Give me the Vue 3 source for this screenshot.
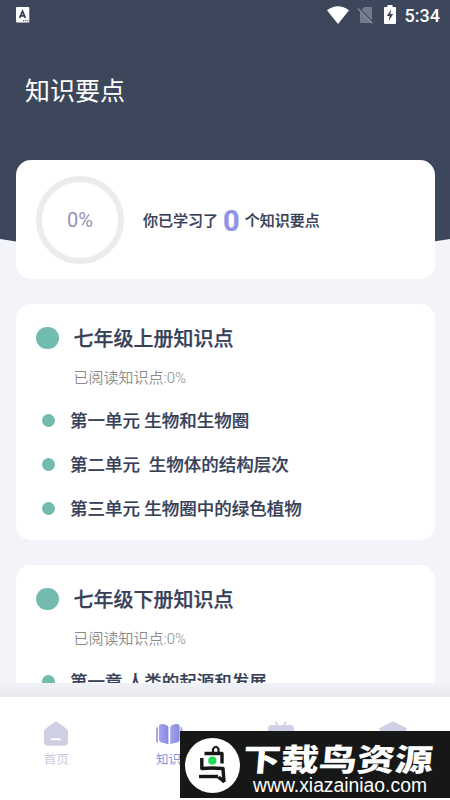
<script setup>
const sections = [
  { title: '七年级上册知识点', read: '已阅读知识点:0%', units: ['第一单元 生物和生物圈', '第二单元  生物体的结构层次', '第三单元 生物圈中的绿色植物'] },
  { title: '七年级下册知识点', read: '已阅读知识点:0%', units: ['第一章 人类的起源和发展'] },
]
</script>

<template>
  <div class="screen">
    <svg class="backdrop" viewBox="0 0 450 260" aria-hidden="true">
      <path d="M0 0H450V239Q225 277 0 239Z" fill="#3d475c" />
    </svg>
    <header class="status">
      <svg class="app-mark" width="14" height="16" viewBox="0 0 14 16">
        <rect width="13.3" height="15.5" rx="1" fill="#fff" />
        <path d="M3.6 11 6.5 4.2 9.4 11M4.7 8.8H8.3" fill="none" stroke="#333c50" stroke-width="1.7" />
        <path d="M7 13.7h1.2M9.1 13.7h1.2M11.2 13.7h1.2" stroke="#333c50" stroke-width="1.1" />
      </svg>
      <div class="status-right">
        <svg width="22" height="18" viewBox="0 0 22 18"><path d="M0 4.2Q11-3.8 22 4.2L11 18Z" fill="#fff" /></svg>
        <svg class="sim" width="18" height="19" viewBox="0 0 18 19">
          <path d="M7.3 1H14Q15 1 15 2V17H3V5.2Z" fill="#737c8c" />
          <path d="M1.6 2.4 16.5 17.3" stroke="#3d475c" stroke-width="2" />
          <path d="M.7 2.5 15.5 17.3" stroke="#858d9b" stroke-width="1.3" />
        </svg>
        <svg class="battery" width="12" height="19" viewBox="0 0 12 19">
          <path d="M3.5 0h5v2H11q1 0 1 1v15q0 1-1 1H1q-1 0-1-1V3q0-1 1-1h2.5Z" fill="#fff" />
          <path d="M7 4.5 2.8 11H5.5L4.8 16 9.2 9H6.4Z" fill="#3d475c" />
        </svg>
        <span class="clock">5:34</span>
      </div>
    </header>
    <h1>知识要点</h1>
    <main>
      <section class="card summary">
        <div class="ring">0%</div>
        <p>你已学习了<b>0</b>个知识要点</p>
      </section>
      <section v-for="s in sections" :key="s.title" class="card chapter">
        <div class="heading"><i class="dot"></i><h2>{{ s.title }}</h2></div>
        <p class="read">{{ s.read }}</p>
        <ul>
          <li v-for="u in s.units" :key="u"><i class="dot small"></i><span>{{ u }}</span></li>
        </ul>
      </section>
    </main>
    <div class="fade"></div>
    <nav>
      <div class="tab">
        <svg width="28" height="26" viewBox="0 0 28 26">
          <path d="M12.4 1.2Q14 .2 15.6 1.2L24.2 7.4Q26 8.8 26 11V21Q26 24.7 22.4 24.7H5.6Q2 24.7 2 21V11Q2 8.8 3.8 7.4Z" fill="#cfd0e3" />
          <path d="M9 18.2H18.7" stroke="#fff" stroke-width="2" />
        </svg>
        <span>首页</span>
      </div>
      <div class="tab active">
        <svg width="28" height="26" viewBox="0 0 28 26">
          <defs><linearGradient id="page"><stop stop-color="#a2a5ec" /><stop offset="1" stop-color="#8589df" /></linearGradient></defs>
          <path d="M3 5.5Q1 6 1 8.5V19Q1 21.5 3 22.5Z M25.5 5.5Q27.5 6 27.5 8.5V19Q27.5 21.5 25.5 22.5Z" fill="#a2a5ec" />
          <path d="M4 6Q4 3 7 3.1Q11.5 3.2 13.4 6V23.3Q10 22.3 7 21.6Q4 21 4 18.5Z" fill="url(#page)" />
          <path d="M24.6 6Q24.6 3 21.6 3.1Q17.1 3.2 15.2 6V23.3Q18.6 22.3 21.6 21.6Q24.6 21 24.6 18.5Z" fill="url(#page)" />
        </svg>
        <span>知识</span>
      </div>
      <div class="tab">
        <svg width="28" height="26" viewBox="0 0 28 26">
          <path d="M8.5.7 11 4.5M19 .7 16.5 4.5" stroke="#cfd0e3" stroke-width="1.7" />
          <rect x="1" y="4" width="26" height="19" rx="4" fill="#cfd0e3" />
        </svg>
      </div>
      <div class="tab">
        <svg width="28" height="26" viewBox="0 0 28 26"><path d="M12.5.9Q14 .1 15.5.9L27 6.7Q29 8 27 9.5L15 16H13L1 9.5Q-1 8 1 6.7Z" fill="#cfd0e3" /></svg>
      </div>
    </nav>
    <aside class="banner">
      <svg width="270" height="67" viewBox="0 0 270 67">
        <circle cx="32.5" cy="34.5" r="27.5" fill="#fff" />
        <g fill="none" stroke="#161818" stroke-width="3.4" stroke-linejoin="round">
          <path d="M33 21V18Q36 13.5 38.5 18V22" stroke-width="2.2" />
          <path d="M24.5 22.5H42V32.5" />
          <path d="M21.8 27V37.5Q31 36.5 43 37.5L44 51" />
          <path d="M19 45.5H38" />
          <path d="M38.5 46 44.5 51" />
        </g>
        <circle cx="32.3" cy="29.7" r="4.1" fill="#22db5b" />
        <text class="brand" transform="translate(62 39.5) skewX(-5)" textLength="190" lengthAdjust="spacingAndGlyphs">下载鸟资源</text>
        <text class="url" x="73" y="61" textLength="174" lengthAdjust="spacingAndGlyphs">www.xiazainiao.com</text>
      </svg>
    </aside>
  </div>
</template>

<style>
body { margin: 0; background: #fff; }
</style>

<style scoped>
.screen { position: relative; display: flex; flex-direction: column; width: 450px; height: 800px; overflow: hidden; background: #f3f4fa; font-family: Roboto, "Noto Sans CJK SC", sans-serif; color: #364057; }
.backdrop { position: absolute; top: 0; left: 0; width: 450px; height: 260px; }
.status { position: relative; flex: none; display: flex; justify-content: space-between; height: 32px; box-sizing: border-box; padding: 5px 10px 0 16px; }
.app-mark { margin-top: 2px; }
.status-right { display: flex; align-items: flex-start; color: #fff; }
.status-right > svg { margin-top: 1px; }
.status-right .sim { margin-left: 8px; }
.status-right .battery { margin: 0 9px 0 9px; }
.status-right .battery { margin-top: 0; }
.clock { font-size: 18px; font-weight: 500; line-height: 22px; }
h1 { position: relative; flex: none; margin: 0; height: 128px; box-sizing: border-box; padding: 41px 25px 0; font-size: 25px; line-height: 38px; font-weight: 400; color: #fff; }
main { position: relative; flex: none; height: 523px; overflow: hidden; padding: 0 15px 0 16px; display: flex; flex-direction: column; gap: 25px; }
.card { flex: none; background: #fff; border-radius: 15px; }
.summary { display: flex; align-items: center; height: 119px; padding-left: 20px; gap: 19px; }
.ring { display: flex; align-items: center; justify-content: center; width: 88px; height: 88px; box-sizing: border-box; border: 6px solid #ebecec; border-radius: 50%; font-size: 20px; color: #9593b6; }
p, h2, ul { margin: 0; padding: 0; }
.summary p { display: flex; align-items: center; font-size: 15px; font-weight: 500; -webkit-text-stroke: .2px; }
.summary b { margin: 2px 5px 0; font-size: 29px; line-height: 34px; color: #9194e2; }
.chapter { height: 236px; box-sizing: border-box; padding: 19px 20px 0; }
.heading { display: flex; align-items: center; gap: 15px; height: 30px; }
.dot { flex: none; width: 22.5px; height: 22.5px; border-radius: 50%; background: #72bbae; }
.dot.small { width: 13px; height: 13px; }
h2 { padding-top: 2px; font-size: 20px; font-weight: 500; line-height: 30px; -webkit-text-stroke: .25px; }
.read { margin-top: 13px; padding-left: 37.5px; font-size: 15px; line-height: 24px; font-weight: 350; color: #8b8b8b; }
ul { list-style: none; padding: 8px 0 0 6px; }
li { display: flex; align-items: center; gap: 15px; height: 44px; font-size: 17.5px; font-weight: 500; white-space: pre; -webkit-text-stroke: .2px; }
li span { padding-bottom: 2px; }
.fade { flex: none; height: 14px; background: linear-gradient(#f1f2f8, #e8e9ee); }
nav { flex: none; height: 103px; display: grid; grid-template-columns: repeat(4, 112.4px); background: #fff; }
.tab { display: flex; flex-direction: column; align-items: center; padding-top: 24px; font-size: 12.5px; line-height: 20px; color: #c8c9df; }
.tab span { margin-top: 3px; }
.active { color: #8c90e0; }
.banner { position: absolute; left: 180px; top: 731px; width: 270px; height: 67px; background: #161818; }
.banner svg { display: block; }
.brand { font: 900 31px "Noto Sans CJK SC", sans-serif; fill: #fff; }
.url { font: 20px "Liberation Sans", Arial, sans-serif; fill: #fff; }
</style>
